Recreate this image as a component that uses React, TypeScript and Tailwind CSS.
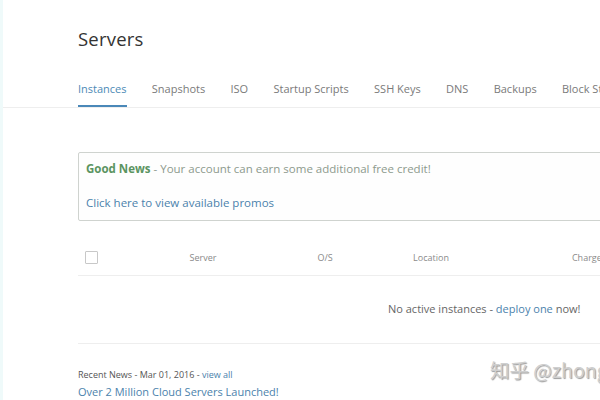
const tabs = ['Instances', 'Snapshots', 'ISO', 'Startup Scripts', 'SSH Keys', 'DNS', 'Backups', 'Block Storage'];

export default function App() {
  return (
    <div
      className="w-[600px] h-[400px] overflow-hidden bg-white border-l-[3px] border-[#effafa] relative"
      style={{ fontFamily: '"Open Sans", "Liberation Sans", sans-serif' }}
    >
      {/* Header */}
      <div className="border-b border-[#eeeeee] w-[900px]">
        <div className="pl-[75px] pt-[27px]">
          <h1 className="text-[18.5px] leading-[24px] text-[#333333] tracking-[0.2px]">Servers</h1>
          <div className="flex gap-[25.3px] mt-[30px] text-[11px] text-[#7a7a7a]">
            {tabs.map((t, i) => (
              <div
                key={t}
                className={
                  i === 0
                    ? 'pb-[7px] border-b-[2px] border-[#4a88b8] text-[#4d8ab6]'
                    : 'pb-[7px] border-b-[2px] border-transparent'
                }
              >
                {t}
              </div>
            ))}
          </div>
        </div>
      </div>

      <div className="pl-[75px] w-[900px]">
        {/* Alert */}
        <div className="mt-[44px] border border-[#cfd3cf] rounded-[2px] h-[69px] px-[7px] pt-[7px] text-[11.5px] bg-[#fefefe]">
          <div>
            <span className="font-bold text-[#5b9461]">Good News</span>
            <span className="text-[#8d9a8d]"> - Your account can earn some additional free credit!</span>
          </div>
          <div className="mt-[17px] text-[#4b82ac]">Click here to view available promos</div>
        </div>

        {/* Table header */}
        <div className="mt-[20px] w-[600px] grid grid-cols-[40px_170px_74px_138px_178px] items-center h-[35px] border-b border-[#eeeeee] text-[9px] text-[#8a8a8a]">
          <div className="pl-[7px]">
            <div className="w-[13px] h-[13px] border border-[#c8c8c8] rounded-[1px]" />
          </div>
          <div className="text-center">Server</div>
          <div className="text-center">O/S</div>
          <div className="text-center">Location</div>
          <div className="text-center">Charges</div>
        </div>

        {/* Empty row */}
        <div className="w-[600px] h-[68px] border-b border-[#eeeeee] flex items-center pl-[310px] text-[11px] text-[#666666]">
          <span>
            No active instances - <span className="text-[#4b82ac]">deploy one</span> now!
          </span>
        </div>

        {/* News */}
        <div className="mt-[24px] text-[9px] text-[#555555]">
          Recent News - Mar 01, 2016 - <span className="text-[#4b82ac]">view all</span>
        </div>
        <div className="mt-[3px] text-[11px] text-[#4b82ac]">Over 2 Million Cloud Servers Launched!</div>
      </div>

      {/* Watermark */}
      <div
        className="absolute left-[487px] top-[355px] text-[19.5px] text-[#cfcfcf] whitespace-nowrap"
        style={{ fontFamily: '"Noto Sans CJK SC", "Noto Sans", sans-serif', textShadow: '1px 1px 1px #9a9a9a' }}
      >
        知乎 @zhong
      </div>
    </div>
  );
}
